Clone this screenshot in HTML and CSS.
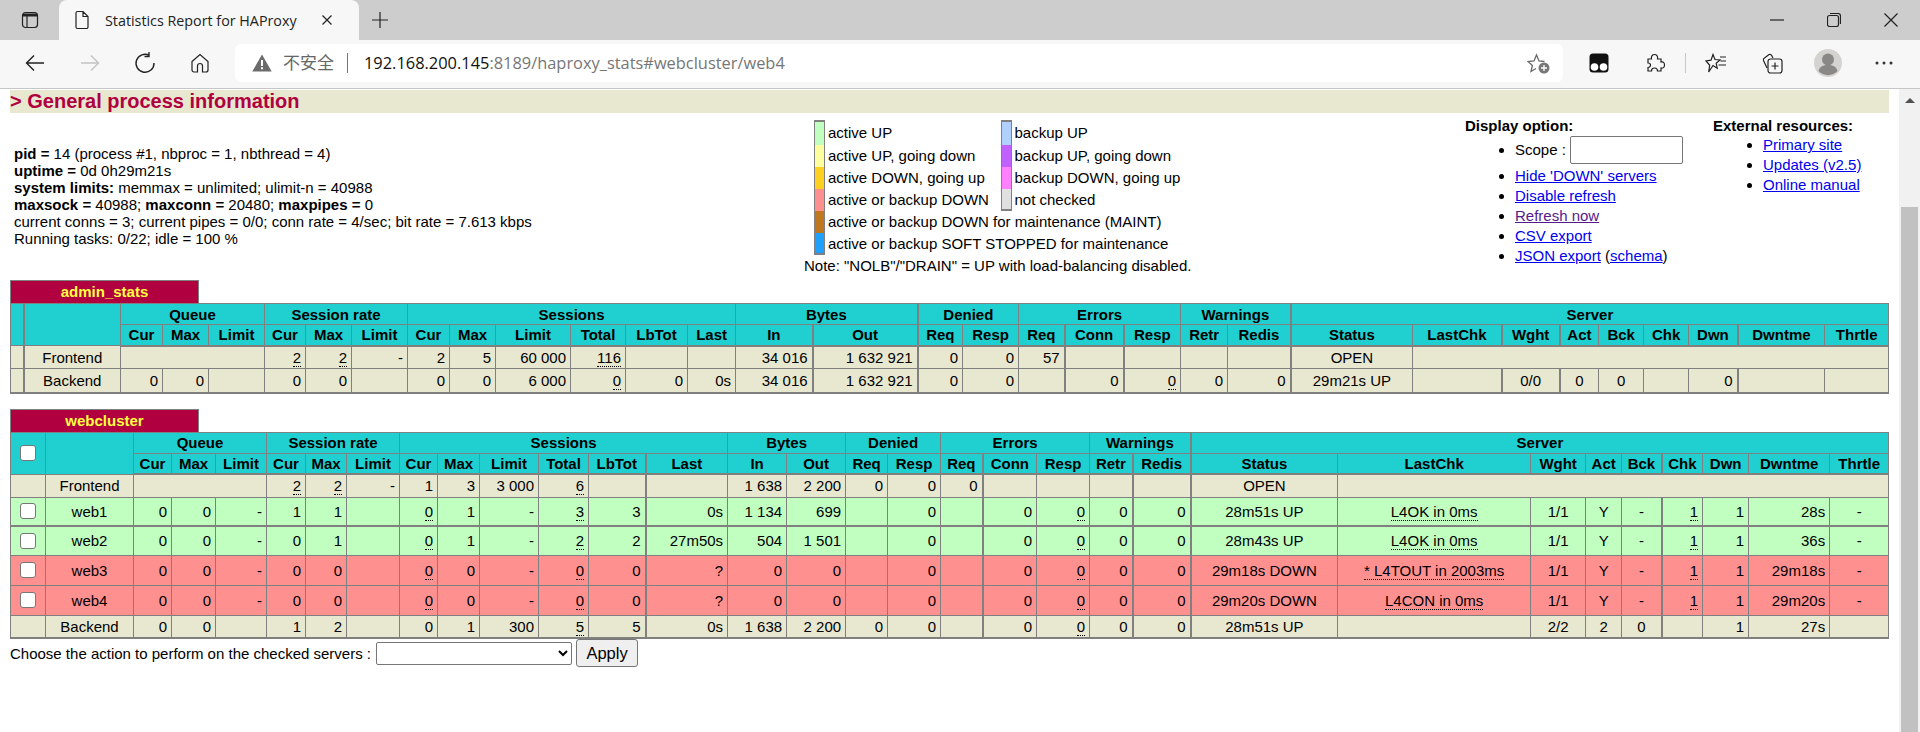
FILE: index.html
```html
<!DOCTYPE html>
<html lang="en">
<head>
<meta charset="utf-8">
<title>Statistics Report for HAProxy</title>
<link rel="stylesheet" href="styles.css">
</head>
<body>
<header class="chrome">
  <div class="tabstrip">
    <span class="strip-btn"><svg width="20" height="20" viewBox="0 0 20 20" class="ic"><rect x="2.5" y="2.5" width="15" height="15" rx="3"/><path d="M3 3.5h14v3H3z" fill="#222" stroke="none"/><path d="M7 6v11"/></svg></span>
    <div class="tab">
      <svg width="16" height="20" viewBox="0 0 16 20" class="ic doc"><path d="M2 3a1.5 1.5 0 0 1 1.5-1.5H9L14 6.500V17a1.500 1.500 0 0 1-1.500 1.500h-9A1.500 1.500 0 0 1 2 17zM9 1.500V6.500H14"/></svg>
      <span class="tab-title">Statistics Report for HAProxy</span>
      <svg width="12" height="12" viewBox="0 0 12 12" class="ic tab-x"><path d="M1.500 1.500l9 9M10.500 1.500l-9 9"/></svg>
    </div>
    <span class="new-tab"><svg width="18" height="18" viewBox="0 0 18 18" class="ic"><path d="M9 1v16M1 9h16"/></svg></span>
    <div class="winctl">
      <span class="win"><svg width="14" height="14" viewBox="0 0 14 14" class="ic"><path d="M0 7h14"/></svg></span>
      <span class="win"><svg width="14" height="14" viewBox="0 0 14 14" class="ic"><rect x="0.500" y="2.500" width="11" height="11" rx="2"/><path d="M3 0.500h8a2.500 2.500 0 0 1 2.500 2.500v8"/></svg></span>
      <span class="win"><svg width="14" height="14" viewBox="0 0 14 14" class="ic"><path d="M0.500 0.500l13 13M13.500 0.500l-13 13"/></svg></span>
    </div>
  </div>
  <div class="toolbar">
    <span class="nav"><svg width="22" height="22" viewBox="0 0 22 22" class="ic big"><path d="M20 11H3M10 3.500L2.500 11l7.500 7.500"/></svg></span>
    <span class="nav"><svg width="22" height="22" viewBox="0 0 22 22" class="ic big off"><path d="M2 11h17M12 3.500L19.500 11 12 18.500"/></svg></span>
    <span class="nav"><svg width="22" height="24" viewBox="0 0 22 24" class="ic big"><path d="M15.500 4.500A9 9 0 1 0 20 12M15 1v4.500h-4.500"/></svg></span>
    <span class="nav"><svg width="22" height="22" viewBox="0 0 22 22" class="ic"><path d="M3 9.500L11 2.500l8 7V18a2 2 0 0 1-2 2h-3.500v-6a2.500 2.500 0 0 0-5 0v6H5a2 2 0 0 1-2-2z"/></svg></span>
    <div class="address">
      <svg width="20" height="18" viewBox="0 0 20 18" class="warn"><path d="M10 0.500L19.700 17.500H0.300z" fill="#6b6b6b"/><path d="M9 6h2v6H9zM9 13.300h2v2H9z" fill="#fff"/></svg>
      <span class="insecure">不安全</span>
      <span class="addr-sep"></span>
      <span class="url"><span class="host">192.168.200.145</span>:8189/haproxy_stats#webcluster/web4</span>
      <svg width="24" height="24" viewBox="0 0 24 24" class="fav-add"><path d="M9 17.500l-5 3 1.400-6L1 10.500l6-.5L9.500 4l2.500 6 5.500.5" fill="none" stroke="#6a6a6a" stroke-width="1.300"/><circle cx="17" cy="17" r="5.500" fill="#777"/><path d="M17 14v6M14 17h6" stroke="#fff" stroke-width="1.300"/></svg>
    </div>
    <div class="tools">
      <span class="tool"><svg width="20" height="20" viewBox="0 0 20 20"><rect x="0.500" y="0.500" width="19" height="19" rx="3.500" fill="#111"/><circle cx="5.500" cy="14" r="3.800" fill="#fff"/><circle cx="14.500" cy="14" r="3.800" fill="#fff"/></svg></span>
      <span class="tool"><svg width="20" height="20" viewBox="0 0 20 20" class="ic"><path d="M3 6h3.500c-.5-3 1-4.500 3-4.500s3.500 1.500 3 4.500H16v3c3-.5 3.500 1.500 3.500 3s-.5 3.500-3.500 3v3h-3.500c0-2-1-3-3-3s-3 1-3 3H3v-3.500c2 0 2.500-1.500 2.500-2.500S5 10 3 10z"/></svg></span>
      <span class="tool-sep"></span>
      <span class="tool"><svg width="22" height="20" viewBox="0 0 22 20" class="ic"><path d="M8 1.500l2 5 5 .5-3.800 3.300 1 5L8 12.500 3.700 19l1-6.700L1 8l5-.8zM15 4h6M15.500 8h5.500M13.500 12h7.500"/></svg></span>
      <span class="tool"><svg width="22" height="22" viewBox="0 0 22 22" class="ic"><rect x="7" y="7" width="14" height="14" rx="2.500"/><path d="M14 10.500v7M10.500 14h7M6 16L2.500 8.500c-.4-1 0-2 1-2.500L8 2.500c1.200-.5 2.200 0 2.700 1L12 6"/></svg></span>
      <span class="tool"><svg width="28" height="28" viewBox="0 0 28 28"><circle cx="14" cy="14" r="14" fill="#d5d3d0"/><circle cx="14" cy="10.500" r="6" fill="#8a8886"/><path d="M4.500 22c1-4.500 5-6 9.500-6s8.500 1.500 9.500 6a13 13 0 0 1-19 0z" fill="#8a8886"/></svg></span>
      <span class="tool"><svg width="18" height="4" viewBox="0 0 18 4"><circle cx="2" cy="2" r="1.500" fill="#333"/><circle cx="9" cy="2" r="1.500" fill="#333"/><circle cx="16" cy="2" r="1.500" fill="#333"/></svg></span>
    </div>
  </div>
</header>
<div class="viewport">
  <main class="page">
    <h2 class="band">&gt; General process information</h2>
    <section class="info">
      <div class="proc">
        <b>pid = </b>14 (process #1, nbproc = 1, nbthread = 4)<br>
        <b>uptime = </b>0d 0h29m21s<br>
        <b>system limits:</b> memmax = unlimited; ulimit-n = 40988<br>
        <b>maxsock = </b>40988; <b>maxconn = </b>20480; <b>maxpipes = </b>0<br>
        current conns = 3; current pipes = 0/0; conn rate = 4/sec; bit rate = 7.613 kbps<br>
        Running tasks: 0/22; idle = 100 %
      </div>
      <div class="legend">
        <div class="leg-grid">
          <div class="leg-col">
            <div class="leg-row"><i class="sw s1"></i>active UP</div>
            <div class="leg-row"><i class="sw s2"></i>active UP, going down</div>
            <div class="leg-row"><i class="sw s3"></i>active DOWN, going up</div>
            <div class="leg-row"><i class="sw s4"></i>active or backup DOWN</div>
            <div class="leg-row"><i class="sw s5"></i>active or backup DOWN for maintenance (MAINT)</div>
            <div class="leg-row"><i class="sw s6"></i>active or backup SOFT STOPPED for maintenance</div>
          </div>
          <div class="leg-col leg-back">
            <div class="leg-row"><i class="sw s7"></i>backup UP</div>
            <div class="leg-row"><i class="sw s8"></i>backup UP, going down</div>
            <div class="leg-row"><i class="sw s9"></i>backup DOWN, going up</div>
            <div class="leg-row"><i class="sw s10"></i>not checked</div>
          </div>
        </div>
        <div class="note">Note: "NOLB"/"DRAIN" = UP with load-balancing disabled.</div>
      </div>
      <div class="opts">
        <b>Display option:</b>
        <ul>
          <li class="scope">Scope : <input class="scope-in" type="text"></li>
          <li><a href="#">Hide 'DOWN' servers</a></li>
          <li><a href="#">Disable refresh</a></li>
          <li><a class="seen" href="#">Refresh now</a></li>
          <li><a href="#">CSV export</a></li>
          <li><a href="#">JSON export</a> (<a href="#">schema</a>)</li>
        </ul>
      </div>
      <div class="ext">
        <b>External resources:</b>
        <ul>
          <li><a href="#">Primary site</a></li>
          <li><a href="#">Updates (v2.5)</a></li>
          <li><a href="#">Online manual</a></li>
        </ul>
      </div>
    </section>

    <div class="pxname">admin_stats</div>
    <table class="stats t1">
      <colgroup><col><col><col><col><col><col><col><col><col><col><col><col><col><col><col><col><col><col><col><col><col><col><col><col><col><col><col><col><col><col><col><col></colgroup>
      <thead>
        <tr class="h1"><th rowspan="2"></th><th rowspan="2"></th><th colspan="3">Queue</th><th colspan="3">Session rate</th><th colspan="6">Sessions</th><th colspan="2">Bytes</th><th colspan="2">Denied</th><th colspan="3">Errors</th><th colspan="2">Warnings</th><th colspan="9">Server</th></tr>
        <tr class="h2"><th>Cur</th><th>Max</th><th>Limit</th><th>Cur</th><th>Max</th><th>Limit</th><th>Cur</th><th>Max</th><th>Limit</th><th>Total</th><th>LbTot</th><th>Last</th><th>In</th><th>Out</th><th>Req</th><th>Resp</th><th>Req</th><th>Conn</th><th>Resp</th><th>Retr</th><th>Redis</th><th>Status</th><th>LastChk</th><th>Wght</th><th>Act</th><th>Bck</th><th>Chk</th><th>Dwn</th><th>Dwntme</th><th>Thrtle</th></tr>
      </thead>
      <tbody>
        <tr class="r-sum"><td></td><td class="c">Frontend</td><td colspan="3"></td><td><u>2</u></td><td><u>2</u></td><td>-</td><td>2</td><td>5</td><td>60 000</td><td><u>116</u></td><td></td><td></td><td>34 016</td><td>1 632 921</td><td>0</td><td>0</td><td>57</td><td></td><td></td><td></td><td></td><td class="c">OPEN</td><td colspan="8"></td></tr>
        <tr class="r-sum"><td></td><td class="c">Backend</td><td>0</td><td>0</td><td></td><td>0</td><td>0</td><td></td><td>0</td><td>0</td><td>6 000</td><td><u>0</u></td><td>0</td><td>0s</td><td>34 016</td><td>1 632 921</td><td>0</td><td>0</td><td></td><td>0</td><td><u>0</u></td><td>0</td><td>0</td><td class="c">29m21s UP</td><td></td><td class="c">0/0</td><td class="c">0</td><td class="c">0</td><td></td><td>0</td><td></td><td></td></tr>
      </tbody>
    </table>

    <div class="pxname second">webcluster</div>
    <table class="stats t2">
      <colgroup><col><col><col><col><col><col><col><col><col><col><col><col><col><col><col><col><col><col><col><col><col><col><col><col><col><col><col><col><col><col><col><col></colgroup>
      <thead>
        <tr class="h1"><th rowspan="2"><input class="cb" type="checkbox"></th><th rowspan="2"></th><th colspan="3">Queue</th><th colspan="3">Session rate</th><th colspan="6">Sessions</th><th colspan="2">Bytes</th><th colspan="2">Denied</th><th colspan="3">Errors</th><th colspan="2">Warnings</th><th colspan="9">Server</th></tr>
        <tr class="h2"><th>Cur</th><th>Max</th><th>Limit</th><th>Cur</th><th>Max</th><th>Limit</th><th>Cur</th><th>Max</th><th>Limit</th><th>Total</th><th>LbTot</th><th>Last</th><th>In</th><th>Out</th><th>Req</th><th>Resp</th><th>Req</th><th>Conn</th><th>Resp</th><th>Retr</th><th>Redis</th><th>Status</th><th>LastChk</th><th>Wght</th><th>Act</th><th>Bck</th><th>Chk</th><th>Dwn</th><th>Dwntme</th><th>Thrtle</th></tr>
      </thead>
      <tbody>
        <tr class="r-sum"><td></td><td class="c">Frontend</td><td colspan="3"></td><td><u>2</u></td><td><u>2</u></td><td>-</td><td>1</td><td>3</td><td>3 000</td><td><u>6</u></td><td></td><td></td><td>1 638</td><td>2 200</td><td>0</td><td>0</td><td>0</td><td></td><td></td><td></td><td></td><td class="c">OPEN</td><td colspan="8"></td></tr>
        <tr class="r-srv up"><td class="cbc"><input class="cb" type="checkbox"></td><td class="c">web1</td><td>0</td><td>0</td><td>-</td><td>1</td><td>1</td><td></td><td><u>0</u></td><td>1</td><td>-</td><td><u>3</u></td><td>3</td><td>0s</td><td>1 134</td><td>699</td><td></td><td>0</td><td></td><td>0</td><td><u>0</u></td><td>0</td><td>0</td><td class="c">28m51s UP</td><td class="c"><u>L4OK in 0ms</u></td><td class="c">1/1</td><td class="c">Y</td><td class="c">-</td><td><u>1</u></td><td>1</td><td>28s</td><td class="c">-</td></tr>
        <tr class="r-srv up"><td class="cbc"><input class="cb" type="checkbox"></td><td class="c">web2</td><td>0</td><td>0</td><td>-</td><td>0</td><td>1</td><td></td><td><u>0</u></td><td>1</td><td>-</td><td><u>2</u></td><td>2</td><td>27m50s</td><td>504</td><td>1 501</td><td></td><td>0</td><td></td><td>0</td><td><u>0</u></td><td>0</td><td>0</td><td class="c">28m43s UP</td><td class="c"><u>L4OK in 0ms</u></td><td class="c">1/1</td><td class="c">Y</td><td class="c">-</td><td><u>1</u></td><td>1</td><td>36s</td><td class="c">-</td></tr>
        <tr class="r-srv down"><td class="cbc"><input class="cb" type="checkbox"></td><td class="c">web3</td><td>0</td><td>0</td><td>-</td><td>0</td><td>0</td><td></td><td><u>0</u></td><td>0</td><td>-</td><td><u>0</u></td><td>0</td><td>?</td><td>0</td><td>0</td><td></td><td>0</td><td></td><td>0</td><td><u>0</u></td><td>0</td><td>0</td><td class="c">29m18s DOWN</td><td class="c"><u>* L4TOUT in 2003ms</u></td><td class="c">1/1</td><td class="c">Y</td><td class="c">-</td><td><u>1</u></td><td>1</td><td>29m18s</td><td class="c">-</td></tr>
        <tr class="r-srv down"><td class="cbc"><input class="cb" type="checkbox"></td><td class="c">web4</td><td>0</td><td>0</td><td>-</td><td>0</td><td>0</td><td></td><td><u>0</u></td><td>0</td><td>-</td><td><u>0</u></td><td>0</td><td>?</td><td>0</td><td>0</td><td></td><td>0</td><td></td><td>0</td><td><u>0</u></td><td>0</td><td>0</td><td class="c">29m20s DOWN</td><td class="c"><u>L4CON in 0ms</u></td><td class="c">1/1</td><td class="c">Y</td><td class="c">-</td><td><u>1</u></td><td>1</td><td>29m20s</td><td class="c">-</td></tr>
        <tr class="r-sum"><td></td><td class="c">Backend</td><td>0</td><td>0</td><td></td><td>1</td><td>2</td><td></td><td>0</td><td>1</td><td>300</td><td><u>5</u></td><td>5</td><td>0s</td><td>1 638</td><td>2 200</td><td>0</td><td>0</td><td></td><td>0</td><td><u>0</u></td><td>0</td><td>0</td><td class="c">28m51s UP</td><td></td><td class="c">2/2</td><td class="c">2</td><td class="c">0</td><td></td><td>1</td><td>27s</td><td></td></tr>
      </tbody>
    </table>
    <form class="action">
      <span>Choose the action to perform on the checked servers :</span>
      <select class="act-sel"><option></option></select>
      <button class="apply" type="button">Apply</button>
    </form>
  </main>
  <aside class="scrollbar">
    <span class="sb-arrow"></span>
    <span class="sb-thumb"></span>
  </aside>
</div>
</body>
</html>
```
FILE: styles.css
```css
* { box-sizing: border-box; }
html, body { margin: 0; height: 732px; overflow: hidden; background: #fff; }
body { font: 15px/17px "Liberation Sans", Arial, sans-serif; color: #000; display: flex; flex-direction: column; }

/* browser chrome */
.chrome { flex: none; height: 89px; font-family: "Open Sans", "Noto Sans CJK SC", sans-serif; }
.ic { fill: none; stroke: #222; stroke-width: 1.2; }
.ic.big { stroke-width: 1.4; }
.ic.off { stroke: #c4c4c4; }
.tabstrip { height: 40px; background: #cdcdcd; display: flex; align-items: center; }
.strip-btn { width: 59px; padding-left: 20px; display: flex; }
.tab { width: 300px; height: 40px; background: #f7f7f7; border-radius: 8px 8px 0 0; display: flex; align-items: center; padding-left: 15px; }
.doc { flex: none; }
.tab-title { margin-left: 15px; width: 213px; font-size: 14.300px; color: #222; white-space: nowrap; }
.tab-x { margin-left: 3px; }
.new-tab { margin-left: 12px; display: flex; }
.winctl { margin-left: auto; display: flex; padding-right: 1px; }
.win { width: 57px; display: flex; justify-content: center; }
.toolbar { height: 49px; background: #f7f7f7; border-bottom: 1px solid #c6c6c6; display: flex; align-items: center; padding: 0 0 3px 7px; }
.nav { width: 55px; display: flex; justify-content: center; }
.address { width: 1328px; height: 38px; margin-left: 8px; background: #fff; border-radius: 6px; display: flex; align-items: center; padding-left: 17px; position: relative; }
.warn { flex: none; }
.insecure { margin-left: 11px; font-size: 17px; color: #666; }
.addr-sep { width: 1px; height: 20px; background: #777; margin: 0 16px 0 13px; }
.url { font-size: 16.400px; color: #767676; white-space: nowrap; }
.host { color: #111; }
.fav-add { margin-left: auto; margin-right: 12px; }
.tools { display: flex; align-items: center; padding-left: 8px; }
.tool { width: 56px; display: flex; justify-content: center; }
.tool-sep { width: 1px; height: 20px; background: #c8c8c8; margin: 0 2px 0 2px; }

/* page + scrollbar */
.viewport { flex: 1; display: flex; min-height: 0; }
.page { flex: 1; min-width: 0; padding: 1px 10px 0; }
.scrollbar { flex: none; width: 21px; background: #f1f1f1; display: flex; flex-direction: column; align-items: center; padding-top: 9px; }
.sb-arrow { width: 0; height: 0; border: 5px solid transparent; border-top: 0; border-bottom: 5px solid #505050; }
.sb-thumb { width: 17px; margin-top: 104px; flex: 1; background: #c1c1c1; }

.band { margin: 0; height: 23px; background: #e8e8d0; color: #b00040; font-size: 20px; line-height: 23px; font-weight: bold; }

/* info block */
.info { height: 167px; display: flex; }
.proc { width: 794px; padding: 32px 0 0 4px; }
.legend { width: 661px; padding-top: 7px; }
.leg-grid { display: flex; padding-left: 10px; }
.leg-col { width: 186.500px; }
.leg-row { height: 22px; padding-bottom: 2px; display: flex; align-items: center; white-space: nowrap; }
.sw { width: 11px; height: 22px; margin-right: 3px; flex: none; align-self: flex-start; border-left: 1px solid #808080; border-right: 1px solid #808080; }
.leg-row:first-child .sw { border-top: 2px solid #808080; height: 25px; }
.leg-row:first-child { height: 25px; padding-bottom: 0; }
.leg-col > .leg-row:last-child .sw { border-bottom: 2px solid #808080; }
.s1 { background: #c0ffc0; } .s2 { background: #ffffa0; } .s3 { background: #ffd020; }
.s4 { background: #ff9090; } .s5 { background: #c07820; } .s6 { background: #20a0ff; }
.s7 { background: #b0d0ff; } .s8 { background: #c060ff; } .s9 { background: #ff80ff; } .s10 { background: #e0e0e0; }
.note { margin-top: 1px; line-height: 20px; }
.opts { width: 248px; padding-top: 4px; }
.ext { padding-top: 4px; }
.info ul { margin: 0; padding: 0 0 0 50px; }
.ext ul { padding-left: 50px; }
.info li { height: 20px; line-height: 20px; }
.ext li:first-child { margin-top: 1px; }
.info li.scope { height: 30px; line-height: 28px; margin-top: 2px; }
.scope-in { width: 113px; height: 28px; border: 1px solid #767676; border-radius: 2px; padding: 0; margin: 0 0 0 0; vertical-align: top; }
a { color: #0000ee; }
a.seen { color: #551a8b; }

/* proxy tables */
.pxname { width: 189px; height: 23px; background: #b00040; color: #ffff40; font-weight: bold; text-align: center; line-height: 22px; border: 1px solid #808080; border-bottom: 0; }
.pxname.second { margin-top: 15px; }
.stats { width: 1879px; table-layout: fixed; border-collapse: collapse; border: 1px solid #808080; border-bottom-width: 2px; }
.stats th, .stats td { border: 1px solid #808080; padding: 0 4px; overflow: visible; white-space: nowrap; }
.stats th { background: #20d0d0; font-weight: bold; text-align: center; }
.stats td { text-align: right; }
.stats td.c { text-align: center; }
.stats u { text-decoration: none; border-bottom: 1px dotted #000; }
.h1 { height: 21px; }
.h2 { height: 21px; }
.h2 th { border-bottom-width: 2px; }
.r-sum { height: 23px; background: #e8e8d0; }
.t1 .r-sum:nth-child(2) { height: 24px; }
.r-srv { height: 29px; }
.r-srv.down { height: 30px; }
.up { background: #c0ffc0; }
.down { background: #ff9090; }
.t2 tbody tr:nth-child(2) td { border-bottom-width: 2px; }
.cb { width: 16px; height: 16px; margin: 0; display: block; appearance: none; background: #fff; border: 1px solid #767676; border-radius: 3px; }
.stats th .cb { margin: 0 0 0 5px; }
.stats td.cbc { padding: 0 0 0 9px; text-align: left; }

.t1 col:nth-child(1) { width: 13px; } .t1 col:nth-child(2) { width: 97px; border-left: 2px solid #808080; } .t1 col:nth-child(3) { width: 42px; } .t1 col:nth-child(4) { width: 46px; }
.t1 col:nth-child(5) { width: 56px; } .t1 col:nth-child(6) { width: 41px; } .t1 col:nth-child(7) { width: 46px; } .t1 col:nth-child(8) { width: 56px; }
.t1 col:nth-child(9) { width: 42px; } .t1 col:nth-child(10) { width: 46px; } .t1 col:nth-child(11) { width: 75px; } .t1 col:nth-child(12) { width: 55px; }
.t1 col:nth-child(13) { width: 62px; } .t1 col:nth-child(14) { width: 48px; } .t1 col:nth-child(15) { width: 77px; } .t1 col:nth-child(16) { width: 105px; border-left: 2px solid #808080; }
.t1 col:nth-child(17) { width: 45px; border-left: 2px solid #808080; } .t1 col:nth-child(18) { width: 56px; } .t1 col:nth-child(19) { width: 46px; } .t1 col:nth-child(20) { width: 59px; border-left: 2px solid #808080; }
.t1 col:nth-child(21) { width: 57px; border-left: 2px solid #808080; } .t1 col:nth-child(22) { width: 47px; } .t1 col:nth-child(23) { width: 63px; } .t1 col:nth-child(24) { width: 122px; border-left: 2px solid #808080; }
.t1 col:nth-child(25) { width: 89px; } .t1 col:nth-child(26) { width: 58px; border-left: 2px solid #808080; } .t1 col:nth-child(27) { width: 39px; border-left: 2px solid #808080; } .t1 col:nth-child(28) { width: 45px; }
.t1 col:nth-child(29) { width: 45px; } .t1 col:nth-child(30) { width: 49px; } .t1 col:nth-child(31) { width: 87px; border-left: 2px solid #808080; } .t1 col:nth-child(32) { width: 64px; }

.t2 col:nth-child(1) { width: 35px; } .t2 col:nth-child(2) { width: 88px; } .t2 col:nth-child(3) { width: 38px; } .t2 col:nth-child(4) { width: 44px; }
.t2 col:nth-child(5) { width: 51px; } .t2 col:nth-child(6) { width: 39px; } .t2 col:nth-child(7) { width: 41px; } .t2 col:nth-child(8) { width: 53px; }
.t2 col:nth-child(9) { width: 38px; } .t2 col:nth-child(10) { width: 42px; } .t2 col:nth-child(11) { width: 59px; } .t2 col:nth-child(12) { width: 50px; }
.t2 col:nth-child(13) { width: 57px; } .t2 col:nth-child(14) { width: 82px; border-left: 2px solid #808080; } .t2 col:nth-child(15) { width: 59px; } .t2 col:nth-child(16) { width: 59px; }
.t2 col:nth-child(17) { width: 42px; } .t2 col:nth-child(18) { width: 53px; } .t2 col:nth-child(19) { width: 42px; } .t2 col:nth-child(20) { width: 54px; border-left: 2px solid #808080; }
.t2 col:nth-child(21) { width: 53px; } .t2 col:nth-child(22) { width: 43px; } .t2 col:nth-child(23) { width: 58px; border-left: 2px solid #808080; } .t2 col:nth-child(24) { width: 147px; border-left: 2px solid #808080; }
.t2 col:nth-child(25) { width: 193px; } .t2 col:nth-child(26) { width: 55px; } .t2 col:nth-child(27) { width: 36px; } .t2 col:nth-child(28) { width: 40px; }
.t2 col:nth-child(29) { width: 41px; border-left: 2px solid #808080; } .t2 col:nth-child(30) { width: 46px; } .t2 col:nth-child(31) { width: 81px; } .t2 col:nth-child(32) { width: 59px; }

/* action form */
.action { display: flex; align-items: center; height: 28px; }
.act-sel { width: 196px; height: 23px; margin-left: 5px; background: #fff; border: 1px solid #767676; border-radius: 2px; font: inherit; }
.apply { width: 62px; height: 28px; margin-left: 4px; padding: 0; background: #efefef; border: 1px solid #767676; border-radius: 3px; font: 16.500px "Liberation Sans", Arial, sans-serif; color: #000; }
```
